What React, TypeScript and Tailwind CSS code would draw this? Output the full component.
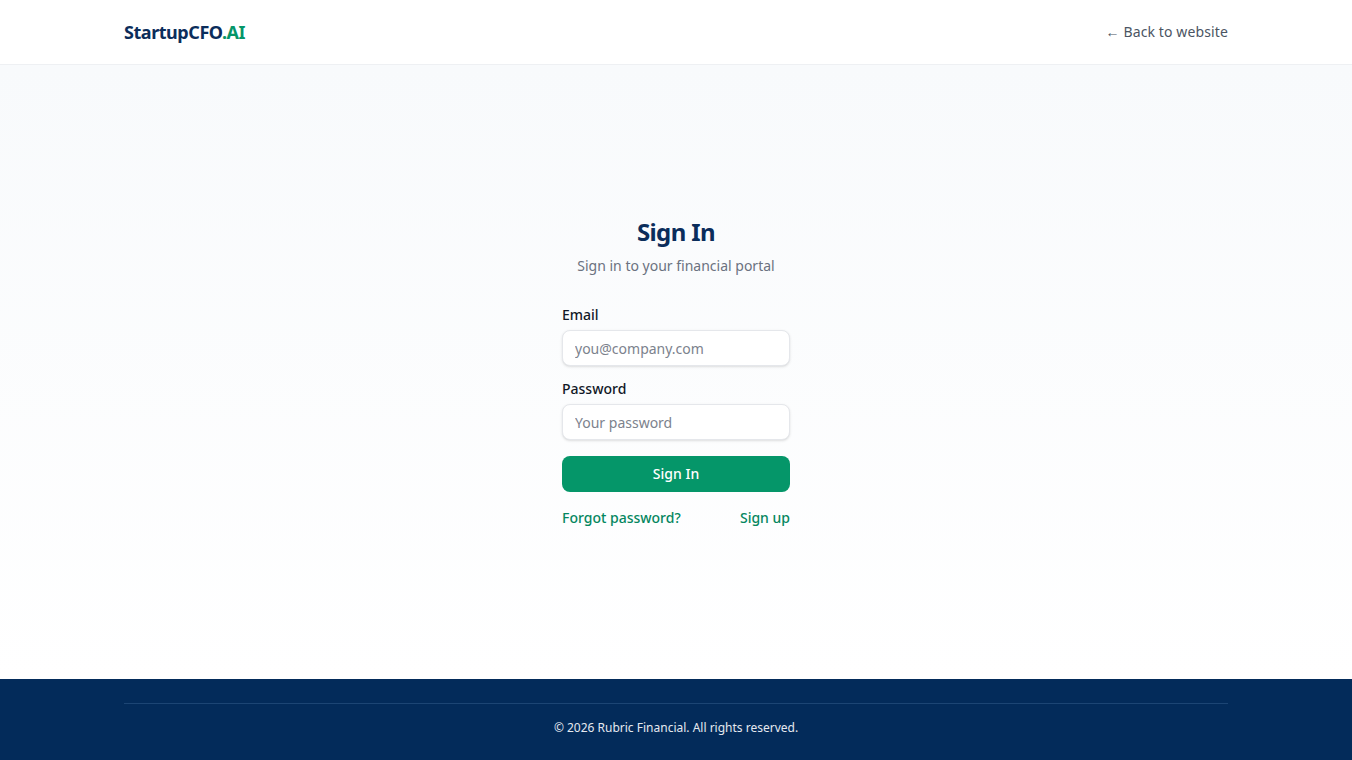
const font = { fontFamily: '"Noto Sans", "Open Sans", Arial, sans-serif' };

export default function App() {
  return (
    <div style={font} className="flex min-h-screen flex-col bg-white">
      {/* Header */}
      <header className="h-[65px] border-b border-[#eef0f3] bg-white">
        <div className="mx-auto flex h-full max-w-6xl items-center justify-between px-6">
          <a href="#" className="text-[18px] font-bold tracking-[-0.45px] text-[#0b2d5b]">
            StartupCFO<span className="text-[#059669]">.AI</span>
          </a>
          <a href="#" className="pb-0.5 text-[14px] tracking-[0.12px] text-[#4b5563]">
            ← Back to website
          </a>
        </div>
      </header>

      {/* Main */}
      <main className="flex flex-1 items-center justify-center bg-gradient-to-b from-[#f8fafc] to-white">
        <div className="w-[228px]">
          <div className="text-center">
            <h1 className="text-[24px] leading-[32px] font-bold tracking-tight text-[#0b2d5b]">Sign In</h1>
            <p className="mt-[8px] text-[14px] leading-[20px] text-[#6b7280]">
              Sign in to your financial portal
            </p>
          </div>

          <form className="mt-[29px]" onSubmit={(e) => e.preventDefault()}>
            <label className="block text-[14px] leading-[20px] font-medium text-[#111827]">Email</label>
            <input
              type="email"
              placeholder="you@company.com"
              className="mt-[5px] block h-9 w-full rounded-lg border border-[#e5e7eb] bg-white px-3 text-[14px] text-[#111827] shadow-sm outline-none placeholder:text-[#7c828d]"
            />

            <label className="mt-[13px] block text-[14px] leading-[20px] font-medium text-[#111827]">Password</label>
            <input
              type="password"
              placeholder="Your password"
              className="mt-[5px] block h-9 w-full rounded-lg border border-[#e5e7eb] bg-white px-3 text-[14px] text-[#111827] shadow-sm outline-none placeholder:text-[#7c828d]"
            />

            <button
              type="submit"
              className="mt-4 h-9 w-full rounded-lg bg-[#059669] pb-px text-[14px] font-medium text-white"
            >
              Sign In
            </button>
          </form>

          <div className="mt-4 flex items-center justify-between text-[14px] leading-[20px] font-medium text-[#05875f]">
            <a href="#">Forgot password?</a>
            <a href="#">Sign up</a>
          </div>
        </div>
      </main>

      {/* Footer */}
      <footer className="bg-[#032b5a] pt-6">
        <div className="mx-auto max-w-6xl px-6">
          <div className="border-t border-[#1c4574] pt-[14px] pb-[22px] text-center text-[12px] leading-[20px] text-[#e5e9f0]">
            © 2026 Rubric Financial. All rights reserved.
          </div>
        </div>
      </footer>
    </div>
  );
}
